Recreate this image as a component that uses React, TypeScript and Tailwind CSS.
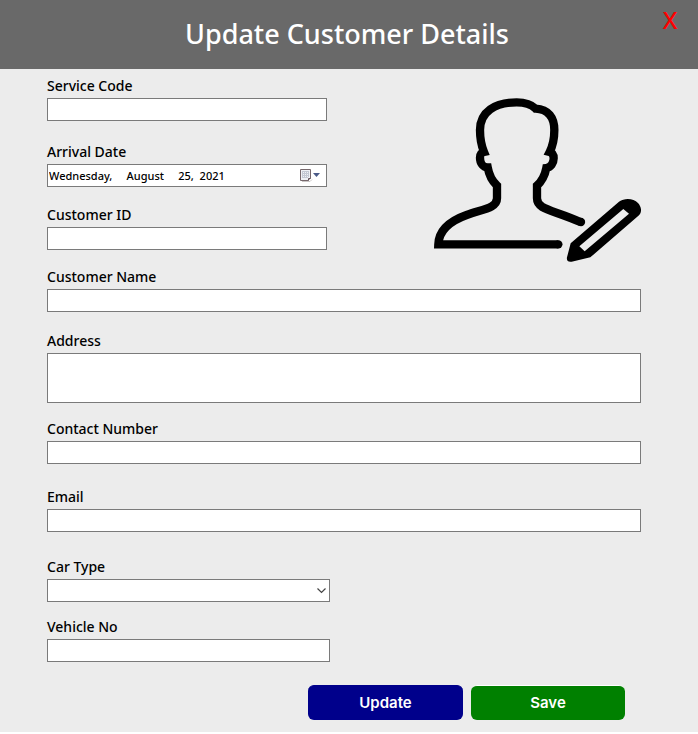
import { useState } from "react";
import type { ReactNode } from "react";

const box =
  "block h-[23px] w-full appearance-none rounded-none border border-[#7a7a7a] bg-white px-px text-[11px] font-medium text-black outline-none";

type FieldProps = {
  id: string;
  label: string;
  className?: string;
  children?: ReactNode;
};

function Field({ id, label, className = "", children }: FieldProps) {
  return (
    <div className={className}>
      <label htmlFor={id} className="mb-0.5 block w-fit text-sm leading-5 font-medium">
        {label}
      </label>
      {children ?? <input id={id} type="text" className={box} />}
    </div>
  );
}

function CalendarIcon() {
  return (
    <svg width="21" height="14" viewBox="0 0 21 14" aria-hidden="true">
      <path d="M2 12.500h8l2-2" fill="none" stroke="#c9c5c5" />
      <path d="M.5.5h10v9l-2 2h-8z" fill="#eef0f4" stroke="#76686c" />
      <path d="M2 2.500h7M2 4.500h7M2 6.500h7M2 8.500h6M2.500 2v7M4.500 2v7M6.500 2v7M8.500 2v6" stroke="#c3c8d3" />
      <path d="M8.500 11.500v-2h2" fill="#fff" stroke="#5d4d55" />
      <path d="M13 4h7l-3.500 4z" fill="#4a5a88" />
    </svg>
  );
}

function EditUserIcon() {
  return (
    <svg className="h-[164px] w-[207px] shrink-0" viewBox="42 39 621 492" role="img" aria-label="Edit customer">
      <g fill="none" stroke="#000" strokeWidth="25">
        <path d="M415 478H55C57 430 98 405 140 390C190 372 231 369 231 340V302C217 289 207 270 203 247C190 247 180 235 180 218C180 208 183 203 192 201C183 179 180 160 180 135C180 80 225 52 290 52C316 52 336 60 347 71C385 73 403 98 403 135C403 160 400 179 389 201C397 203 401 209 401 220C401 235 392 247 379 249C375 270 365 289 351 302V340C351 375 400 374 483 412" />
      </g>
      <circle cx="415" cy="478" r="12.500" />
      <circle cx="483" cy="411" r="12.500" />
      <path
        fillRule="evenodd"
        d="M597 350C615 337 641 340 654 354C665 366 666 382 657 391L511 517L455 530C445 532 439 527 441 517L452 475ZM610 372L478 484L494 499L627 386Z"
      />
    </svg>
  );
}

export default function App() {
  const [arrival, setArrival] = useState("Wednesday,     August     25,  2021");

  return (
    <div className="bg-[#ececec] font-['Noto_Sans',sans-serif] text-black">
      <header className="relative flex h-[69px] items-center justify-center bg-[#696969] pr-1 pb-0.5 text-white">
        <h1 className="text-[27px] leading-9 font-medium">Update Customer Details</h1>
        <button
          type="button"
          aria-label="Close"
          className="absolute top-1 right-5 h-8 w-4 text-center text-2xl leading-8 font-medium text-[#ff0000]"
        >
          X
        </button>
      </header>

      <form className="pt-[7px] pr-[57px] pb-3 pl-[47px]" onSubmit={(e) => e.preventDefault()}>
        <div className="flex justify-between">
          <div className="w-[280px]">
            <Field id="service-code" label="Service Code" />
            <Field id="arrival-date" label="Arrival Date" className="mt-[21px]">
              <div className="relative">
                <input
                  id="arrival-date"
                  type="text"
                  value={arrival}
                  onChange={(e) => setArrival(e.target.value)}
                  className={box}
                />
                <button type="button" aria-label="Open calendar" className="absolute top-[5px] right-1.5">
                  <CalendarIcon />
                </button>
              </div>
            </Field>
            <Field id="customer-id" label="Customer ID" className="mt-[18px]" />
          </div>
          <div className="pt-[22px]">
            <EditUserIcon />
          </div>
        </div>

        <Field id="customer-name" label="Customer Name" className="mt-[5px]" />
        <Field id="address" label="Address" className="mt-[19px]">
          <textarea
            id="address"
            className="block h-[50px] w-full resize-none border border-[#7a7a7a] bg-white px-px text-[11px] outline-none"
          />
        </Field>
        <Field id="contact-number" label="Contact Number" className="mt-4" />
        <Field id="email" label="Email" className="mt-[23px]" />
        <Field id="car-type" label="Car Type" className="mt-[25px] w-[283px]">
          <div className="relative">
            <select id="car-type" className={box} defaultValue="">
              <option value="" />
            </select>
            <svg
              className="pointer-events-none absolute top-[9px] right-1"
              width="9"
              height="6"
              viewBox="0 0 9 6"
              aria-hidden="true"
            >
              <path d="M.5.5l4 4 4-4" fill="none" stroke="#444" strokeWidth="1.200" />
            </svg>
          </div>
        </Field>
        <Field id="vehicle-no" label="Vehicle No" className="mt-[15px] w-[283px]" />

        <div className="mt-[23px] mr-4 flex justify-end gap-2 font-['Inter',sans-serif] text-[15px] font-semibold text-white">
          <button type="submit" className="h-[35px] w-[155px] rounded-md border-t border-[#00008b] bg-[#00008b]">
            Update
          </button>
          <button type="button" className="h-[35px] w-[154px] rounded-md border-t border-white bg-[#008000]">
            Save
          </button>
        </div>
      </form>
    </div>
  );
}
